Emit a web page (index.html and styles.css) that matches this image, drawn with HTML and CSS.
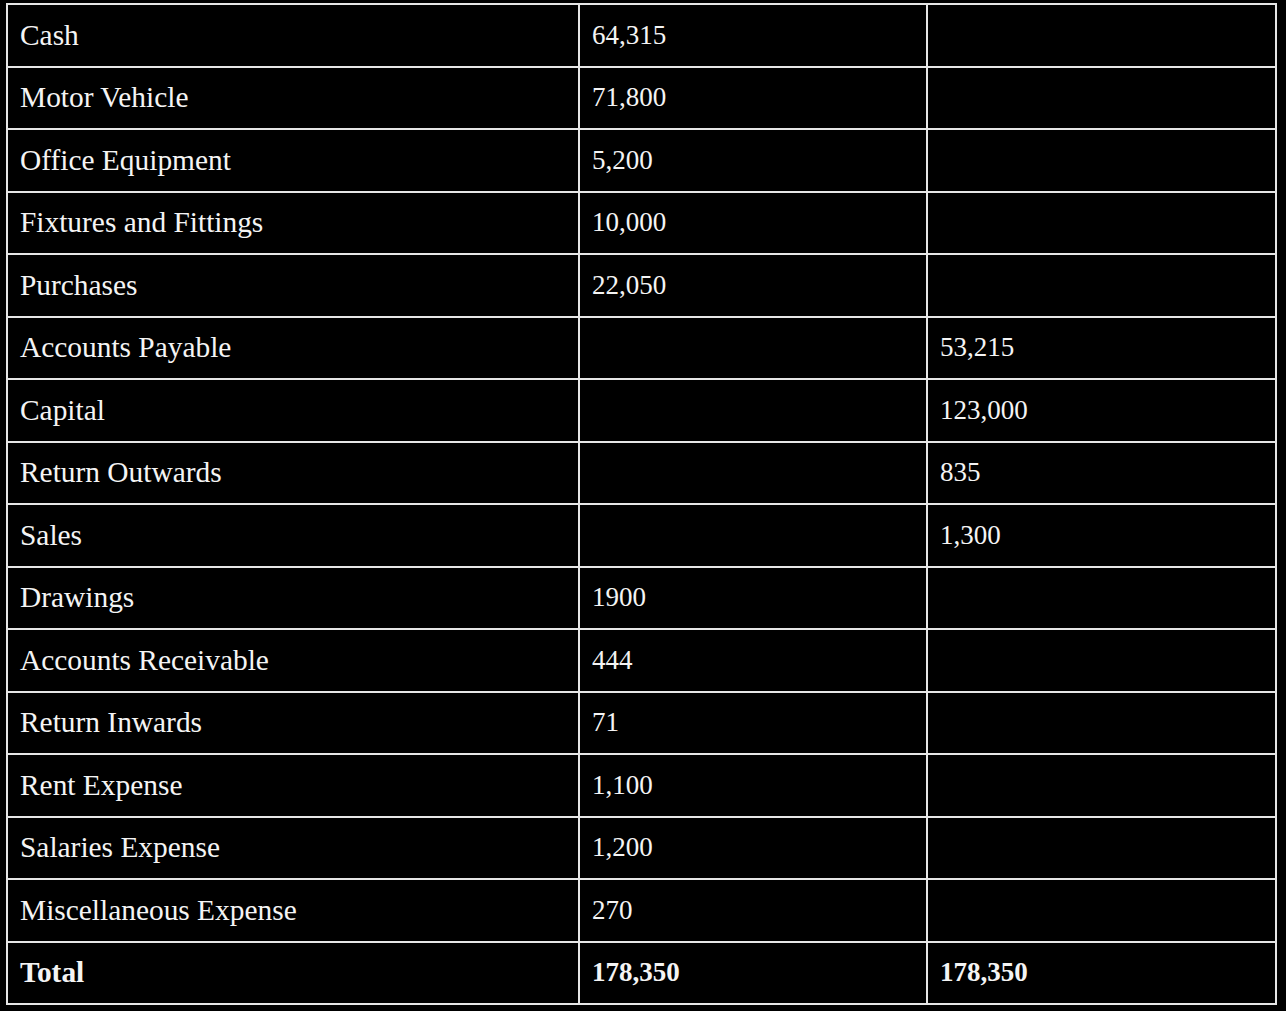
FILE: index.html
```html
<!DOCTYPE html>
<html lang="en">
<head>
<meta charset="utf-8">
<title>Trial Balance</title>
<link rel="stylesheet" href="styles.css">
</head>
<body>
<div class="wrap">
<table class="tb">
  <colgroup>
    <col class="c-acc">
    <col class="c-dr">
    <col class="c-cr">
  </colgroup>
  <tbody>
    <tr><td class="acc">Cash</td><td class="num">64,315</td><td class="num"></td></tr>
    <tr><td class="acc">Motor Vehicle</td><td class="num">71,800</td><td class="num"></td></tr>
    <tr><td class="acc">Office Equipment</td><td class="num">5,200</td><td class="num"></td></tr>
    <tr><td class="acc">Fixtures and Fittings</td><td class="num">10,000</td><td class="num"></td></tr>
    <tr><td class="acc">Purchases</td><td class="num">22,050</td><td class="num"></td></tr>
    <tr><td class="acc">Accounts Payable</td><td class="num"></td><td class="num">53,215</td></tr>
    <tr><td class="acc">Capital</td><td class="num"></td><td class="num">123,000</td></tr>
    <tr><td class="acc">Return Outwards</td><td class="num"></td><td class="num">835</td></tr>
    <tr><td class="acc">Sales</td><td class="num"></td><td class="num">1,300</td></tr>
    <tr><td class="acc">Drawings</td><td class="num">1900</td><td class="num"></td></tr>
    <tr><td class="acc">Accounts Receivable</td><td class="num">444</td><td class="num"></td></tr>
    <tr><td class="acc">Return Inwards</td><td class="num">71</td><td class="num"></td></tr>
    <tr><td class="acc">Rent Expense</td><td class="num">1,100</td><td class="num"></td></tr>
    <tr><td class="acc">Salaries Expense</td><td class="num">1,200</td><td class="num"></td></tr>
    <tr><td class="acc">Miscellaneous Expense</td><td class="num">270</td><td class="num"></td></tr>
    <tr class="total"><td class="acc">Total</td><td class="num">178,350</td><td class="num">178,350</td></tr>
  </tbody>
</table>
</div>
</body>
</html>
```

FILE: styles.css
```css
html, body {
  margin: 0;
  padding: 0;
  background: #000;
}

.wrap {
  padding: 3px 0 0 6px;
}

.tb {
  width: 1269px;
  table-layout: fixed;
  border-collapse: collapse;
  background: #000;
  color: #f4f4f4;
  font-family: "Liberation Serif", "Times New Roman", serif;
}

.c-acc { width: 572px; }
.c-dr { width: 348px; }
.c-cr { width: 349px; }

.tb tr {
  height: 62.5px;
}

.tb td {
  border: 2px solid #e6e6e6;
  padding: 0 12px;
  vertical-align: middle;
  white-space: nowrap;
}

.acc {
  font-size: 29.4px;
}

.num {
  font-size: 27px;
}

.total td {
  font-weight: bold;
}
```
